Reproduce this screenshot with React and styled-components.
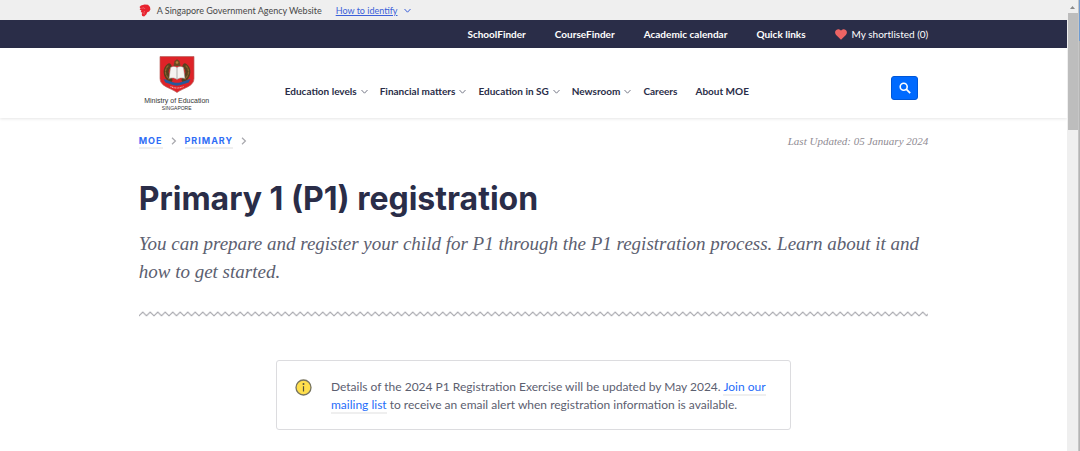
import React, { useState } from 'react';
import styled, { createGlobalStyle, css } from 'styled-components';

const GlobalStyle = createGlobalStyle`
  * {
    box-sizing: border-box;
  }

  body {
    margin: 0;
    background-color: #ffffff;
    color: #5c6070;
    font-family: Lato, 'Liberation Sans', sans-serif;
  }

  a {
    text-decoration: none;
  }
`;

// Layout
const Screen = styled.div`
  display: flex;
  min-height: 100vh;
`;

const Page = styled.div`
  flex: 1;
  min-width: 0;
`;

const Container = styled.div`
  width: 74%;
  margin: 0 auto;
`;

// Government masthead
const Masthead = styled.div`
  background-color: #efefef;
`;

const MastheadRow = styled(Container)`
  display: flex;
  align-items: center;
  height: 20px;
  font-size: 9px;
  color: #484848;
`;

const MastheadText = styled.span`
  margin: 0 14px 0 6px;
`;

const IdentifyButton = styled.button`
  display: flex;
  align-items: center;
  gap: 6px;
  padding: 0;
  border: none;
  background: none;
  color: #3b5fd9;
  font: inherit;
  cursor: pointer;

  span {
    text-decoration: underline;
  }
`;

// Dark utility bar
const UtilityBar = styled.div`
  background-color: #2a2d48;
`;

const UtilityNav = styled(Container).attrs({ as: 'nav' })`
  display: flex;
  align-items: center;
  justify-content: flex-end;
  gap: 29px;
  height: 28px;
`;

const UtilityLink = styled.a`
  display: flex;
  align-items: center;
  gap: 5px;
  color: #ffffff;
  font-size: 10px;
  font-weight: ${props => (props.$light ? 400 : 700)};
  white-space: nowrap;
`;

// Main header
const Header = styled.header`
  box-shadow: 0 1px 3px rgba(0, 0, 0, 0.1);
`;

const HeaderRow = styled(Container)`
  display: flex;
  align-items: center;
  height: 70px;
`;

const Logo = styled.a`
  display: flex;
  flex-direction: column;
  align-items: center;
  width: 76px;
  color: #333333;
  font-family: 'Liberation Sans', Arial, sans-serif;
  font-size: 7px;
  line-height: 8px;
  white-space: nowrap;

  small {
    font-size: 5px;
    line-height: 6px;
  }

  svg {
    margin-bottom: 4px;
  }
`;

const MainNav = styled.nav`
  display: flex;
  align-items: center;
  gap: 12px;
  margin: 16px auto 0 70px;
`;

const navItem = css`
  display: flex;
  align-items: center;
  gap: 4px;
  padding: 0;
  border: none;
  background: none;
  color: #2a2d48;
  font-family: inherit;
  font-size: 10px;
  font-weight: 700;
  line-height: 16px;
  white-space: nowrap;
  cursor: pointer;
`;

const NavButton = styled.button`
  ${navItem}
`;

const NavLink = styled.a`
  ${navItem}

  & + & {
    margin-left: 6px;
  }
`;

const SearchButton = styled.button`
  display: flex;
  align-items: center;
  justify-content: center;
  width: 27px;
  height: 24px;
  margin: 9px 10px 0 0;
  padding: 0;
  border: 1px solid #0057d8;
  border-radius: 3px;
  background-color: #006aff;
  cursor: pointer;
`;

// Page heading
const TopRow = styled.div`
  display: flex;
  align-items: center;
  justify-content: space-between;
  padding-top: 15px;
`;

const Breadcrumb = styled.nav`
  display: flex;
  align-items: center;
  gap: 8px;
`;

const Crumb = styled.a`
  border-bottom: 2px solid #efefef;
  color: #2f6df6;
  font-family: Inter, sans-serif;
  font-size: 9px;
  font-weight: 700;
  line-height: 13px;
  letter-spacing: 1px;
`;

const Updated = styled.span`
  color: #8f8b93;
  font-family: 'Liberation Serif', serif;
  font-size: 11px;
  font-style: italic;
  line-height: 16px;
`;

const Title = styled.h1`
  margin: 31px 0 0;
  color: #2a2d48;
  font-family: Inter, sans-serif;
  font-size: 32px;
  font-weight: 700;
  line-height: 38px;
`;

const Lead = styled.p`
  margin: 12px 0 0;
  color: #5c6070;
  font-family: 'Liberation Serif', serif;
  font-size: 19px;
  font-style: italic;
  line-height: 28px;
`;

const ZigzagLine = styled.svg`
  display: block;
  width: 100%;
  height: 6px;
  margin: 25px 0 43px;
`;

// Notice
const Notice = styled.section`
  display: flex;
  align-items: flex-start;
  gap: 19px;
  width: 100%;
  max-width: 515px;
  margin: 0 auto;
  padding: 17px 18px 15px;
  border: 1px solid #dcdcdf;
  border-radius: 3px;

  svg {
    flex: none;
    margin-top: 1px;
  }
`;

const NoticeText = styled.p`
  margin: 0;
  font-size: 12px;
  line-height: 18px;
`;

const TextLink = styled.a`
  border-bottom: 2px solid #efefef;
  color: #1f6dfa;
`;

// Scroll rail
const Rail = styled.div`
  display: flex;
  flex-direction: column;
  align-items: center;
  width: 12px;
  border-right: 1px solid #c6c6c6;
  background-color: #efefef;

  svg {
    margin: 6px 0 4px;
  }
`;

const Thumb = styled.div`
  width: 10px;
  height: 117px;
  background-color: #bdbdbd;
`;

const Edge = styled.div`
  width: 1px;
  background-color: #b4b4b4;

  &::before {
    content: '';
    display: block;
    height: 41px;
    background-color: #6f9bd1;
  }
`;

const Chevron = ({ color = '#777a88' }) => (
  <svg width="7" height="7" viewBox="0 0 7 7" fill="none" stroke={color} aria-hidden="true">
    <path d="M0.5 2 3.5 5.200 6.500 2" />
  </svg>
);

const CrumbArrow = () => (
  <svg width="6" height="8" viewBox="0 0 6 8" fill="none" stroke="#a8a8ad" strokeWidth="1.2" aria-hidden="true">
    <path d="M1 0.8 4.400 4 1 7.200" />
  </svg>
);

const LionIcon = () => (
  <svg width="12" height="13" viewBox="0 0 12 13" aria-hidden="true">
    <path
      fill="#e8232f"
      d="M2 1.6 5.6.4 9 .8l2 2.1.4 2.6-1.2 2-1.9.8-1 2.1L5.1 12.6 3.2 12l-.5-1.9.8-1.4-1.7-.8.6-1.400L.6 5.500l1-.9L.5 3z"
    />
    <path fill="none" stroke="#f6b6b9" strokeWidth=".4" d="m2.400 4.300 2.600-.5 1 1.200M5.500 7l-.6 1.800M4.200 9.600l1.600.4" />
  </svg>
);

const Crest = () => (
  <svg width="36" height="37" viewBox="0 0 36 37" aria-hidden="true">
    <path fill="#de2328" stroke="#b9645f" strokeWidth=".7" d="M1 .5h34v22c0 8-10 9-17 14C11 31.500 1 30.500 1 22.500z" />
    <g fill="none" strokeLinecap="round">
      <path stroke="#59401f" strokeWidth="5" d="M10 10c-4 3-4 9 1 14M26 10c4 3 4 9-1 14" />
      <path stroke="#8d652b" strokeWidth="1.200" strokeDasharray="2 1.500" d="M9 10c-4 4-3 9 1 13M27 10c4 4 3 9-1 13" />
    </g>
    <path fill="#6b4a22" d="m14.500 10 1-5L18 3.300 20.500 5l1 5z" />
    <circle cx="18" cy="6.500" r="1.300" fill="#b48239" />
    <path fill="#f5f4f1" stroke="#8b8176" strokeWidth=".5" d="M11.500 11.500c2-1.500 4.500-1.500 6.500 0 2-1.500 4.500-1.500 6.500 0l1.500 11c-3-1-6-.6-8 1-2-1.600-5-2-8-1z" />
    <path stroke="#92908e" strokeWidth=".7" d="M18 11.500V23" />
    <path fill="#265a9c" d="M4.500 23c5 1 8 3.800 13.500 3.800S26.500 24 31.500 23l-1.800 3.600C25 27.500 22 29.800 18 29.800s-7-2.300-11.700-3.200z" />
    <path fill="none" stroke="#f0aaa8" strokeWidth="1.200" strokeDasharray="1 .6" d="M11.500 30.500q6.500 3 13 0" />
  </svg>
);

const HeartIcon = () => (
  <svg width="12" height="11" viewBox="0 0 12 11" aria-hidden="true">
    <path fill="#ed6464" d="M6 10.800 1.100 5.900C-.4 4.300-.1 2 1.300.9 2.800-.2 4.900.1 6 1.800 7.100.1 9.200-.2 10.700.9c1.400 1.100 1.700 3.400.2 5z" />
  </svg>
);

const SearchIcon = () => (
  <svg width="12" height="12" viewBox="0 0 12 12" fill="none" stroke="#ffffff" aria-hidden="true">
    <circle cx="4.700" cy="4.700" r="3.500" strokeWidth="1.600" />
    <path strokeWidth="1.800" d="m7.200 7.200 4 4" />
  </svg>
);

const InfoIcon = () => (
  <svg width="17" height="17" viewBox="0 0 17 17" aria-hidden="true">
    <circle cx="8.500" cy="8.500" r="7.500" fill="#ffdf4d" stroke="#77745f" strokeWidth="1.300" />
    <circle cx="8.500" cy="5" r="1" fill="#55523e" />
    <path stroke="#55523e" strokeWidth="1.200" d="M8.500 7.200v5.300" />
  </svg>
);

const menuItems = ['Education levels', 'Financial matters', 'Education in SG', 'Newsroom'];
const plainItems = ['Careers', 'About MOE'];
const utilityItems = ['SchoolFinder', 'CourseFinder', 'Academic calendar', 'Quick links'];

const App = () => {
  const [openMenu, setOpenMenu] = useState(null);

  const toggleMenu = (name) => {
    setOpenMenu(openMenu === name ? null : name);
  };

  return (
    <>
      <GlobalStyle />
      <Screen>
        <Page>
          <Masthead>
            <MastheadRow>
              <LionIcon />
              <MastheadText>A Singapore Government Agency Website</MastheadText>
              <IdentifyButton type="button">
                <span>How to identify</span>
                <Chevron color="#3b5fd9" />
              </IdentifyButton>
            </MastheadRow>
          </Masthead>

          <UtilityBar>
            <UtilityNav aria-label="Utility">
              {utilityItems.map((item) => (
                <UtilityLink key={item} href="#">{item}</UtilityLink>
              ))}
              <UtilityLink href="#" $light>
                <HeartIcon />
                My shortlisted (0)
              </UtilityLink>
            </UtilityNav>
          </UtilityBar>

          <Header>
            <HeaderRow>
              <Logo href="#">
                <Crest />
                Ministry of Education
                <small>SINGAPORE</small>
              </Logo>
              <MainNav aria-label="Main">
                {menuItems.map((item) => (
                  <NavButton
                    key={item}
                    type="button"
                    aria-expanded={openMenu === item}
                    onClick={() => toggleMenu(item)}
                  >
                    {item}
                    <Chevron />
                  </NavButton>
                ))}
                {plainItems.map((item) => (
                  <NavLink key={item} href="#">{item}</NavLink>
                ))}
              </MainNav>
              <SearchButton type="button" aria-label="Search">
                <SearchIcon />
              </SearchButton>
            </HeaderRow>
          </Header>

          <Container as="main">
            <TopRow>
              <Breadcrumb aria-label="Breadcrumb">
                <Crumb href="#">MOE</Crumb>
                <CrumbArrow />
                <Crumb href="#">PRIMARY</Crumb>
                <CrumbArrow />
              </Breadcrumb>
              <Updated>Last Updated: 05 January 2024</Updated>
            </TopRow>

            <Title>Primary 1 (P1) registration</Title>
            <Lead>
              You can prepare and register your child for P1 through the P1 registration process.
              Learn about it and how to get started.
            </Lead>

            <ZigzagLine aria-hidden="true">
              <defs>
                <pattern id="zigzag" width="7.500" height="6" patternUnits="userSpaceOnUse">
                  <path d="M-1 5.800 0 4.800 3.750 1 7.500 4.800 8.500 5.800" fill="none" stroke="#aaaab0" strokeWidth="1.100" />
                </pattern>
              </defs>
              <rect width="100%" height="6" fill="url(#zigzag)" />
            </ZigzagLine>

            <Notice>
              <InfoIcon />
              <NoticeText>
                Details of the 2024 P1 Registration Exercise will be updated by May 2024.{' '}
                <TextLink href="#">Join our mailing list</TextLink> to receive an email alert when
                registration information is available.
              </NoticeText>
            </Notice>
          </Container>
        </Page>

        <Rail aria-hidden="true">
          <svg width="5" height="3" viewBox="0 0 5 3">
            <path fill="#8a8a8a" d="M0 3 2.500 0 5 3z" />
          </svg>
          <Thumb />
        </Rail>
        <Edge />
      </Screen>
    </>
  );
};

export default App;
